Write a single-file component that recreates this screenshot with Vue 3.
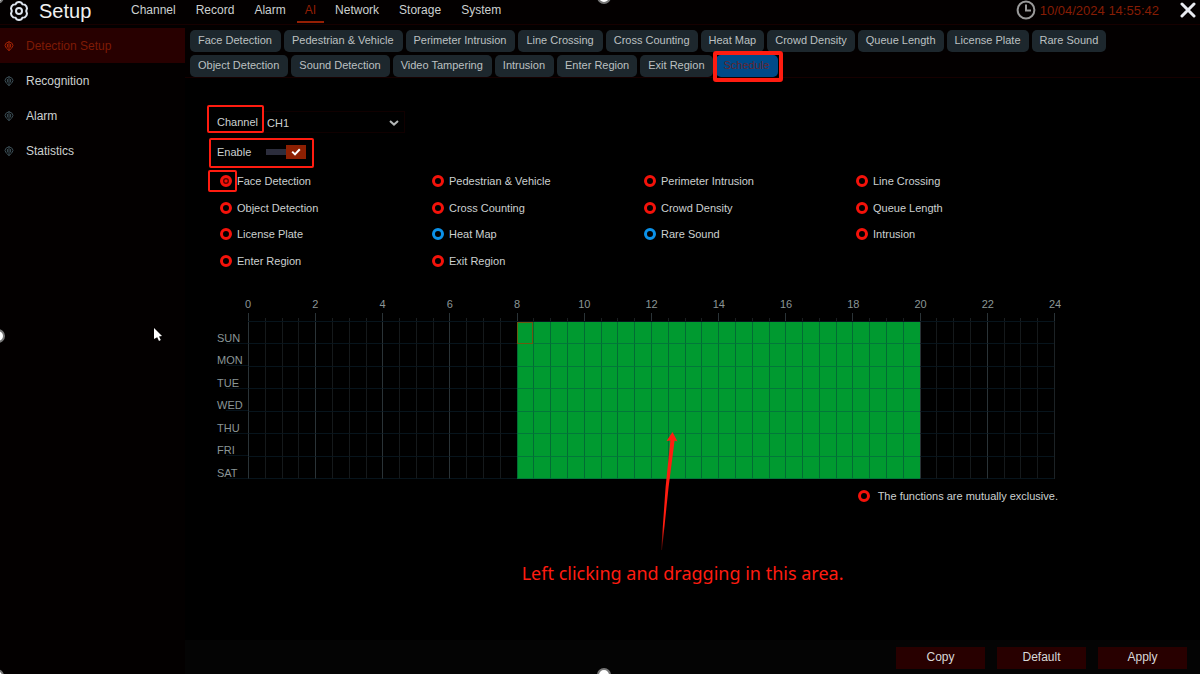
<script setup>
import { ref } from 'vue'

const navItems = ['Channel', 'Record', 'Alarm', 'AI', 'Network', 'Storage', 'System']
const sideItems = ['Detection Setup', 'Recognition', 'Alarm', 'Statistics']
const tabRows = [
  ['Face Detection', 'Pedestrian & Vehicle', 'Perimeter Intrusion', 'Line Crossing', 'Cross Counting', 'Heat Map', 'Crowd Density', 'Queue Length', 'License Plate', 'Rare Sound'],
  ['Object Detection', 'Sound Detection', 'Video Tampering', 'Intrusion', 'Enter Region', 'Exit Region', 'Schedule'],
]
const functions = [
  'Face Detection', 'Pedestrian & Vehicle', 'Perimeter Intrusion', 'Line Crossing',
  'Object Detection', 'Cross Counting', 'Crowd Density', 'Queue Length',
  'License Plate', 'Heat Map', 'Rare Sound', 'Intrusion',
  'Enter Region', 'Exit Region',
]
const independent = ['Heat Map', 'Rare Sound']
const days = ['SUN', 'MON', 'TUE', 'WED', 'THU', 'FRI', 'SAT']
const hours = Array.from({ length: 13 }, (_, i) => i * 2)

const channel = ref('CH1')
const enabled = ref(true)
const selected = ref('Face Detection')
const isOn = (slot) => slot > 16 && slot <= 40
</script>

<template>
  <div class="screen">
    <header class="topbar">
      <div class="brand">
        <svg class="gear" viewBox="0 0 20 20" aria-hidden="true">
          <path d="M7.7 1.6 Q10 .4 12.3 1.6 L13.5 3.4 L15.7 3.6 Q17.9 5 18 7.4 L17.2 10 L18 12.6 Q17.9 15 15.7 16.4 L13.5 16.6 L12.3 18.4 Q10 19.6 7.7 18.4 L6.5 16.6 L4.3 16.4 Q2.1 15 2 12.6 L2.8 10 L2 7.4 Q2.1 5 4.3 3.6 L6.5 3.4 Z" />
          <circle cx="10" cy="10" r="3" />
        </svg>
        <h1>Setup</h1>
      </div>
      <nav class="nav">
        <a v-for="n in navItems" :key="n" href="#" :class="{ active: n === 'AI' }">{{ n }}</a>
      </nav>
      <div class="clock">
        <svg viewBox="0 0 20 20" aria-hidden="true">
          <circle cx="10" cy="10" r="8.4" />
          <path d="M10 4.5 V10.5 H15" />
        </svg>
        <time>10/04/2024 14:55:42</time>
      </div>
      <button class="close" type="button" aria-label="Close">
        <svg viewBox="0 0 16 16"><path d="M2 2 L14 14 M14 2 L2 14" /></svg>
      </button>
    </header>

    <div class="body">
      <aside class="sidebar">
        <a v-for="(s, i) in sideItems" :key="s" href="#" :class="{ active: i === 0 }">
          <svg viewBox="0 0 10 10" aria-hidden="true">
            <path d="M5 .6 L8.2 2.4 L9 4.6 L7.6 7.2 L5 9.6 L2.4 7.2 L1 4.6 L1.8 2.4 Z M5 .6 V9.6 M3.4 3 V6.4 M6.6 3 V6.4" />
          </svg>
          <span>{{ s }}</span>
        </a>
      </aside>

      <main class="main">
        <div class="tabs">
          <div v-for="(row, r) in tabRows" :key="r" class="tab-row">
            <button v-for="t in row" :key="t" type="button" class="tab" :class="{ current: t === 'Schedule' }">{{ t }}</button>
          </div>
        </div>

        <div class="content">
          <div class="field channel">
            <label class="marked" for="channel">Channel</label>
            <div class="select">
              <select id="channel" v-model="channel">
                <option>CH1</option>
                <option>CH2</option>
              </select>
              <svg viewBox="0 0 10 6" aria-hidden="true"><path d="M1 1 L5 4.6 L9 1" /></svg>
            </div>
          </div>

          <label class="field enable marked">
            <span>Enable</span>
            <input v-model="enabled" type="checkbox" class="visually-hidden">
            <span class="switch">
              <span class="thumb"><svg viewBox="0 0 10 8"><path d="M1.2 3.6 L4 6.4 L8.8 1.2" /></svg></span>
            </span>
          </label>

          <div class="options">
            <label v-for="f in functions" :key="f" class="option">
              <span class="dot-wrap" :class="{ marked: f === selected }">
                <input v-model="selected" type="radio" name="function" :value="f" class="ring" :class="{ blue: independent.includes(f) }">
              </span>
              <span>{{ f }}</span>
            </label>
          </div>

          <section class="schedule" aria-label="Weekly schedule">
            <div class="hours">
              <span v-for="h in hours" :key="h"><b>{{ h }}</b></span>
            </div>
            <div class="ticks">
              <i v-for="n in 48" :key="n" :class="{ major: n % 4 === 1 }"></i>
            </div>
            <div class="days">
              <span v-for="d in days" :key="d">{{ d }}</span>
            </div>
            <div class="cells">
              <template v-for="(d, r) in days" :key="d">
                <i v-for="n in 48" :key="n" :class="{ on: isOn(n), major: n % 4 === 1, focus: r === 0 && n === 17 }"></i>
              </template>
            </div>
            <div class="callout">
              <svg viewBox="0 0 14 120" aria-hidden="true">
                <defs>
                  <linearGradient id="tail" x1="0" y1="0" x2="0" y2="1">
                    <stop offset="0.8" stop-color="#ff1c10" />
                    <stop offset="1" stop-color="#ff1c10" stop-opacity="0.2" />
                  </linearGradient>
                </defs>
                <path fill="url(#tail)" d="M11.5 0 L16.5 9.5 L13.6 8.6 L7.6 55 L1 118 L.2 118 L4.6 55 L9.4 8.4 L5.5 9 Z" />
              </svg>
              <p>Left clicking and dragging in this area.</p>
            </div>
          </section>

          <p class="legend"><span class="ring"></span>The functions are mutually exclusive.</p>
        </div>

        <footer class="actions">
          <button type="button">Copy</button>
          <button type="button">Default</button>
          <button type="button">Apply</button>
        </footer>
      </main>
    </div>

    <div class="overlay" aria-hidden="true">
      <i class="handle corner"></i>
      <i class="handle top"></i>
      <i class="handle left"></i>
      <i class="handle bottom"></i>
      <i class="handle bottom-left"></i>
      <svg class="pointer" viewBox="0 0 8 13"><path d="M0 0 L8 8 L5 8.4 L6.8 12 L5 13 L3.2 9.2 L0 11 Z" /></svg>
    </div>
  </div>
</template>

<style>
body {
  margin: 0;
  background: #000;
}
</style>

<style scoped>
* {
  box-sizing: border-box;
}
.screen {
  position: relative;
  display: flex;
  flex-direction: column;
  min-height: 100vh;
  background: #000;
  color: #ccd0d0;
  font-family: "Liberation Sans", Arial, sans-serif;
  font-size: 11px;
}
button {
  margin: 0;
  padding: 0;
  border: 0;
  font-family: inherit;
  color: inherit;
}
a {
  color: inherit;
  text-decoration: none;
}
svg {
  display: block;
  fill: none;
}

.topbar {
  display: flex;
  height: 25px;
  padding: 0 4px 0 9px;
  background: #030000;
  border-bottom: 1px solid #170000;
}
.brand {
  display: flex;
  align-items: center;
  width: 113px;
  height: 22px;
  gap: 10px;
}
.gear {
  width: 20px;
  height: 20px;
  stroke: #dde4ee;
  stroke-width: 2;
}
h1 {
  margin: 0;
  font-size: 20px;
  font-weight: 400;
  line-height: 22px;
  color: #f0f0f0;
}
.nav {
  display: flex;
  gap: 2px;
  flex: 1;
  font-size: 12px;
}
.nav a {
  height: 23px;
  padding: 0 9px;
  line-height: 20px;
  border-bottom: 2px solid transparent;
}
.nav a.active {
  padding: 0 8px;
  color: #951f04;
  border-color: #951f04;
}
.clock {
  display: flex;
  align-items: center;
  height: 20px;
  gap: 4px;
  color: #861d04;
  font-size: 13px;
}
.clock svg {
  width: 20px;
  height: 20px;
  stroke: #9a9a9a;
  stroke-width: 2;
}
.close {
  width: 16px;
  height: 20px;
  margin-left: 21px;
  background: none;
}
.close svg {
  width: 16px;
  height: 16px;
  stroke: #e8eaf0;
  stroke-width: 3;
  stroke-linecap: round;
}

.body {
  display: flex;
  flex: 1;
}
.sidebar {
  display: flex;
  flex-direction: column;
  flex: none;
  width: 185px;
  padding-top: 3px;
  background: #030000;
  font-size: 12px;
}
.sidebar a {
  display: flex;
  align-items: center;
  height: 35px;
  padding-left: 4px;
  gap: 12px;
}
.sidebar a svg {
  width: 10px;
  height: 10px;
  stroke: #3c4e56;
  stroke-width: 1;
}
.sidebar a.active {
  background: #280000;
  color: #7e1b05;
}
.sidebar a.active svg {
  stroke: #a62405;
}

.main {
  display: flex;
  flex-direction: column;
  flex: 1;
  min-width: 0;
}
.tabs {
  display: flex;
  flex-direction: column;
  gap: 3px;
  padding: 5px 0 0 5px;
  background: #030000;
  border-bottom: 1px solid #170000;
}
.tab-row {
  display: flex;
  gap: 3px;
}
.tab {
  height: 22px;
  padding: 0 8px 2px;
  border-radius: 5px;
  background: #1d272d;
  color: #bcc0c1;
  font-size: 11px;
  line-height: 20px;
  white-space: nowrap;
}
.tab:nth-child(-n + 4),
.tab.current {
  padding-right: 9px;
}
.tab.current {
  position: relative;
  background: #004a88;
  color: #64262f;
}
.tab.current::after {
  content: "";
  position: absolute;
  inset: -4px -5px -5px -3px;
  border: 4px solid #ff1c10;
  border-radius: 3px;
}

.content {
  flex: 1;
  padding: 33px 139px 0 32px;
}
.marked {
  position: relative;
}
.marked::after {
  content: "";
  position: absolute;
  z-index: 1;
  border: 2px solid #ff1c10;
  border-radius: 2px;
  pointer-events: none;
}
.field {
  display: flex;
  align-items: center;
}
.channel {
  height: 22px;
}
.channel > label {
  width: 46px;
}
.channel .marked::after {
  inset: -11px -1px -5px -10px;
}
.select {
  position: relative;
  width: 142px;
}
.select select {
  width: 100%;
  height: 22px;
  padding: 2px 4px 0;
  appearance: none;
  border: 1px solid #100000;
  border-left: 0;
  background: #000;
  color: inherit;
  font-family: inherit;
  font-size: 11px;
}
.select svg {
  position: absolute;
  top: 9px;
  right: 6px;
  width: 10px;
  height: 6px;
  stroke: #b4b8b8;
  stroke-width: 2;
}
.enable {
  width: 92px;
  height: 16px;
  margin-top: 11px;
  justify-content: space-between;
}
.enable.marked::after {
  inset: -6px -5px -8px -8px;
}
.visually-hidden {
  position: absolute;
  width: 1px;
  height: 1px;
  margin: 0;
  opacity: 0;
}
.switch {
  display: flex;
  align-items: center;
  justify-content: flex-end;
  width: 40px;
  height: 14px;
  margin-right: 3px;
  background: linear-gradient(#2c2d3c, #2c2d3c) 0 center / 100% 6px no-repeat;
}
.thumb {
  display: grid;
  place-items: center;
  width: 20px;
  height: 14px;
  background: #8e2002;
}
.thumb svg {
  width: 10px;
  height: 8px;
  stroke: #fff;
  stroke-width: 2;
}

.options {
  display: grid;
  grid-template-columns: repeat(4, 1fr);
  grid-auto-rows: 1fr;
  height: 106px;
  margin: 8px -7px 0 3px;
}
.option {
  display: flex;
  align-items: center;
  gap: 5px;
}
.dot-wrap {
  display: flex;
}
.dot-wrap.marked::after {
  inset: -5px -5px -5px -12px;
}
.ring {
  flex: none;
  width: 12px;
  height: 12px;
  margin: 0;
  appearance: none;
  border: 3px solid #f4120a;
  border-radius: 50%;
}
.ring.blue {
  border-color: #0b92ea;
}
.ring:checked {
  background: radial-gradient(circle, #f4120a 1px, #5a0400 2px);
}

.schedule {
  position: relative;
  display: grid;
  grid-template-columns: 31px 1fr;
  margin: 23px 6px 0 0;
  color: #8b9696;
}
.hours {
  grid-column: 2;
  display: flex;
  justify-content: space-between;
  height: 16px;
}
.hours span {
  display: flex;
  justify-content: center;
  width: 0;
}
.hours b {
  font-weight: 400;
  line-height: 14px;
}
.ticks {
  grid-column: 2;
  display: grid;
  grid-template-columns: repeat(48, 1fr);
  align-items: end;
  height: 8px;
  border-right: 1px solid #2a3337;
}
.ticks i {
  height: 3px;
  border-left: 1px solid #1a1e20;
}
.ticks i.major {
  height: 8px;
  border-color: #2a3337;
}
.days {
  display: grid;
  grid-auto-rows: 1fr;
  height: 158px;
}
.days span {
  display: flex;
  align-items: flex-end;
  line-height: 12px;
  background: linear-gradient(#06121a, #06121a) 9px 100% / 100% 1px no-repeat;
}
.cells {
  display: grid;
  grid-template-columns: repeat(48, 1fr);
  grid-auto-rows: 1fr;
  height: 158px;
  border-top: 1px solid #07141c;
  border-right: 1px solid #1c2225;
}
.cells i {
  border-left: 1px solid #15191b;
  border-bottom: 1px solid #07141c;
}
.cells i.major {
  border-left-color: #2a3337;
}
.cells i.on {
  background: #009a30;
  border-left-color: #026c34;
  border-bottom-color: #02783a;
}
.cells i.on.focus {
  border: 1px solid #6a5a10;
}
.callout {
  position: absolute;
  top: 135px;
  left: 36%;
  display: flex;
  flex-direction: column;
  padding-left: 3px;
  color: #ff1c10;
}
.callout svg {
  width: 14px;
  height: 120px;
  margin-left: 139px;
  overflow: visible;
}
.callout p {
  margin: 8px 0 0;
  font-family: "Noto Sans", "Open Sans", sans-serif;
  font-size: 18px;
  line-height: 26px;
  white-space: nowrap;
}
.legend {
  display: flex;
  align-items: center;
  justify-content: flex-end;
  gap: 8px;
  margin: 10px 3px 0 0;
  line-height: 14px;
}

.actions {
  display: flex;
  justify-content: flex-end;
  gap: 12px;
  padding: 7px 13px 5px;
  background: #040404;
}
.actions button {
  width: 89px;
  height: 22px;
  padding-bottom: 2px;
  background: #280000;
  color: #d8d8d8;
  font-size: 12px;
  line-height: 20px;
}

.overlay {
  position: absolute;
  inset: 0;
  overflow: hidden;
  pointer-events: none;
}
.handle {
  position: absolute;
  width: 14px;
  height: 14px;
  border: 2px solid #777;
  border-radius: 50%;
  background: #fff;
}
.handle.corner {
  top: -10px;
  left: -10px;
}
.handle.top {
  top: -10px;
  left: calc(50% - 3px);
}
.handle.left {
  top: calc(50% - 8px);
  left: -9px;
}
.handle.bottom {
  bottom: -8px;
  left: calc(50% - 3px);
}
.handle.bottom-left {
  bottom: -9px;
  left: -10px;
}
.pointer {
  position: absolute;
  top: 328px;
  left: 154px;
  width: 8px;
  height: 13px;
  fill: #fff;
}
</style>
